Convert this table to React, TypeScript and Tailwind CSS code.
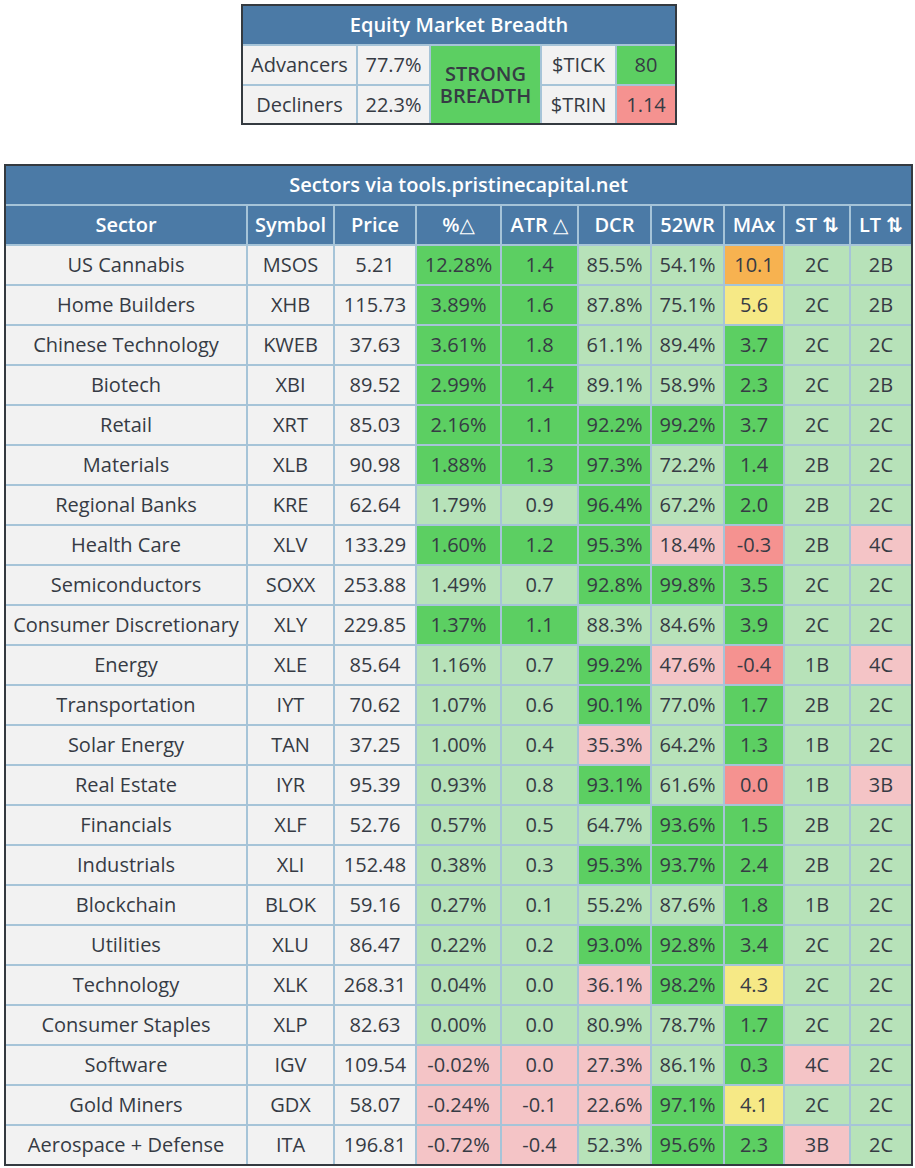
import React from "react";

type Clr = "G" | "L" | "P" | "R" | "O" | "Y";

const BG: Record<Clr, string> = {
  G: "bg-[#5ccf62]",
  L: "bg-[#b7e2b9]",
  P: "bg-[#f4c4c6]",
  R: "bg-[#f59290]",
  O: "bg-[#f7b250]",
  Y: "bg-[#f6e986]",
};

type Row = [string, string, string, string, Clr, string, Clr, string, Clr, string, Clr, string, Clr, string, Clr, string, Clr];

const rows: Row[] = [
  ["US Cannabis", "MSOS", "5.21", "12.28%", "G", "1.4", "G", "85.5%", "L", "54.1%", "L", "10.1", "O", "2C", "L", "2B", "L"],
  ["Home Builders", "XHB", "115.73", "3.89%", "G", "1.6", "G", "87.8%", "L", "75.1%", "L", "5.6", "Y", "2C", "L", "2B", "L"],
  ["Chinese Technology", "KWEB", "37.63", "3.61%", "G", "1.8", "G", "61.1%", "L", "89.4%", "L", "3.7", "G", "2C", "L", "2C", "L"],
  ["Biotech", "XBI", "89.52", "2.99%", "G", "1.4", "G", "89.1%", "L", "58.9%", "L", "2.3", "G", "2C", "L", "2B", "L"],
  ["Retail", "XRT", "85.03", "2.16%", "G", "1.1", "G", "92.2%", "G", "99.2%", "G", "3.7", "G", "2C", "L", "2C", "L"],
  ["Materials", "XLB", "90.98", "1.88%", "G", "1.3", "G", "97.3%", "G", "72.2%", "L", "1.4", "G", "2B", "L", "2C", "L"],
  ["Regional Banks", "KRE", "62.64", "1.79%", "L", "0.9", "L", "96.4%", "G", "67.2%", "L", "2.0", "G", "2B", "L", "2C", "L"],
  ["Health Care", "XLV", "133.29", "1.60%", "G", "1.2", "G", "95.3%", "G", "18.4%", "P", "-0.3", "R", "2B", "L", "4C", "P"],
  ["Semiconductors", "SOXX", "253.88", "1.49%", "L", "0.7", "L", "92.8%", "G", "99.8%", "G", "3.5", "G", "2C", "L", "2C", "L"],
  ["Consumer Discretionary", "XLY", "229.85", "1.37%", "G", "1.1", "G", "88.3%", "L", "84.6%", "L", "3.9", "G", "2C", "L", "2C", "L"],
  ["Energy", "XLE", "85.64", "1.16%", "L", "0.7", "L", "99.2%", "G", "47.6%", "P", "-0.4", "R", "1B", "L", "4C", "P"],
  ["Transportation", "IYT", "70.62", "1.07%", "L", "0.6", "L", "90.1%", "G", "77.0%", "L", "1.7", "G", "2B", "L", "2C", "L"],
  ["Solar Energy", "TAN", "37.25", "1.00%", "L", "0.4", "L", "35.3%", "P", "64.2%", "L", "1.3", "G", "1B", "L", "2C", "L"],
  ["Real Estate", "IYR", "95.39", "0.93%", "L", "0.8", "L", "93.1%", "G", "61.6%", "L", "0.0", "R", "1B", "L", "3B", "P"],
  ["Financials", "XLF", "52.76", "0.57%", "L", "0.5", "L", "64.7%", "L", "93.6%", "G", "1.5", "G", "2B", "L", "2C", "L"],
  ["Industrials", "XLI", "152.48", "0.38%", "L", "0.3", "L", "95.3%", "G", "93.7%", "G", "2.4", "G", "2B", "L", "2C", "L"],
  ["Blockchain", "BLOK", "59.16", "0.27%", "L", "0.1", "L", "55.2%", "L", "87.6%", "L", "1.8", "G", "1B", "L", "2C", "L"],
  ["Utilities", "XLU", "86.47", "0.22%", "L", "0.2", "L", "93.0%", "G", "92.8%", "G", "3.4", "G", "2C", "L", "2C", "L"],
  ["Technology", "XLK", "268.31", "0.04%", "L", "0.0", "L", "36.1%", "P", "98.2%", "G", "4.3", "Y", "2C", "L", "2C", "L"],
  ["Consumer Staples", "XLP", "82.63", "0.00%", "L", "0.0", "L", "80.9%", "L", "78.7%", "L", "1.7", "G", "2C", "L", "2C", "L"],
  ["Software", "IGV", "109.54", "-0.02%", "P", "0.0", "P", "27.3%", "P", "86.1%", "L", "0.3", "G", "4C", "P", "2C", "L"],
  ["Gold Miners", "GDX", "58.07", "-0.24%", "P", "-0.1", "P", "22.6%", "P", "97.1%", "G", "4.1", "Y", "2C", "L", "2C", "L"],
  ["Aerospace + Defense", "ITA", "196.81", "-0.72%", "P", "-0.4", "P", "52.3%", "L", "95.6%", "G", "2.3", "G", "3B", "P", "2C", "L"],
];

const headers = ["Sector", "Symbol", "Price", "%\u25B3", "ATR \u25B3", "DCR", "52WR", "MAx", "ST \u21C5", "LT \u21C5"];

const cell = "h-[38px] flex items-center justify-center whitespace-nowrap";
const gray = "bg-[#f2f2f2]";
const head = "bg-[#4b7aa6] text-white font-semibold";

export default function App() {
  return (
    <div
      className="min-h-[1168px] w-[915px] bg-white pt-[4px] pl-[4px] text-[20px] text-[#363b44]"
      style={{ fontFamily: '"Open Sans", "DejaVu Sans", sans-serif' }}
    >
      {/* Equity Market Breadth */}
      <div className="ml-[237px] w-[436px] border-2 border-[#343a40]">
        <div className="grid grid-cols-[113px_71px_109px_73px_58px] grid-rows-[38px_38px_37px] gap-[2px] bg-[#a6c4d8]">
          <div className={`col-span-5 flex items-center justify-center ${head}`}>Equity Market Breadth</div>
          <div className={`flex items-center justify-center ${gray}`}>Advancers</div>
          <div className={`flex items-center justify-center ${gray}`}>77.7%</div>
          <div className="row-span-2 flex items-center justify-center bg-[#5ccf62] text-center font-semibold leading-[22px]">
            <span>
              STRONG
              <br />
              BREADTH
            </span>
          </div>
          <div className={`flex items-center justify-center ${gray}`}>$TICK</div>
          <div className="flex items-center justify-center bg-[#5ccf62]">80</div>
          <div className={`flex items-center justify-center ${gray}`}>Decliners</div>
          <div className={`flex items-center justify-center ${gray}`}>22.3%</div>
          <div className={`flex items-center justify-center ${gray}`}>$TRIN</div>
          <div className="flex items-center justify-center bg-[#f59290]">1.14</div>
        </div>
      </div>

      {/* Sectors table */}
      <div className="mt-[39px] w-[909px] border-2 border-[#343a40]">
        <div className="grid grid-cols-[240px_85px_80px_83px_75px_71px_71px_58px_64px_60px] gap-[2px] bg-[#a6c4d8]">
          <div className={`col-span-10 ${cell} ${head}`}>Sectors via tools.pristinecapital.net</div>
          {headers.map((h) => (
            <div key={h} className={`${cell} ${head}`}>
              {h}
            </div>
          ))}
          {rows.map((r) => (
            <React.Fragment key={r[1]}>
              <div className={`${cell} ${gray}`}>{r[0]}</div>
              <div className={`${cell} ${gray}`}>{r[1]}</div>
              <div className={`${cell} ${gray}`}>{r[2]}</div>
              <div className={`${cell} ${BG[r[4]]}`}>{r[3]}</div>
              <div className={`${cell} ${BG[r[6]]}`}>{r[5]}</div>
              <div className={`${cell} ${BG[r[8]]}`}>{r[7]}</div>
              <div className={`${cell} ${BG[r[10]]}`}>{r[9]}</div>
              <div className={`${cell} ${BG[r[12]]}`}>{r[11]}</div>
              <div className={`${cell} ${BG[r[14]]}`}>{r[13]}</div>
              <div className={`${cell} ${BG[r[16]]}`}>{r[15]}</div>
            </React.Fragment>
          ))}
        </div>
      </div>
    </div>
  );
}
